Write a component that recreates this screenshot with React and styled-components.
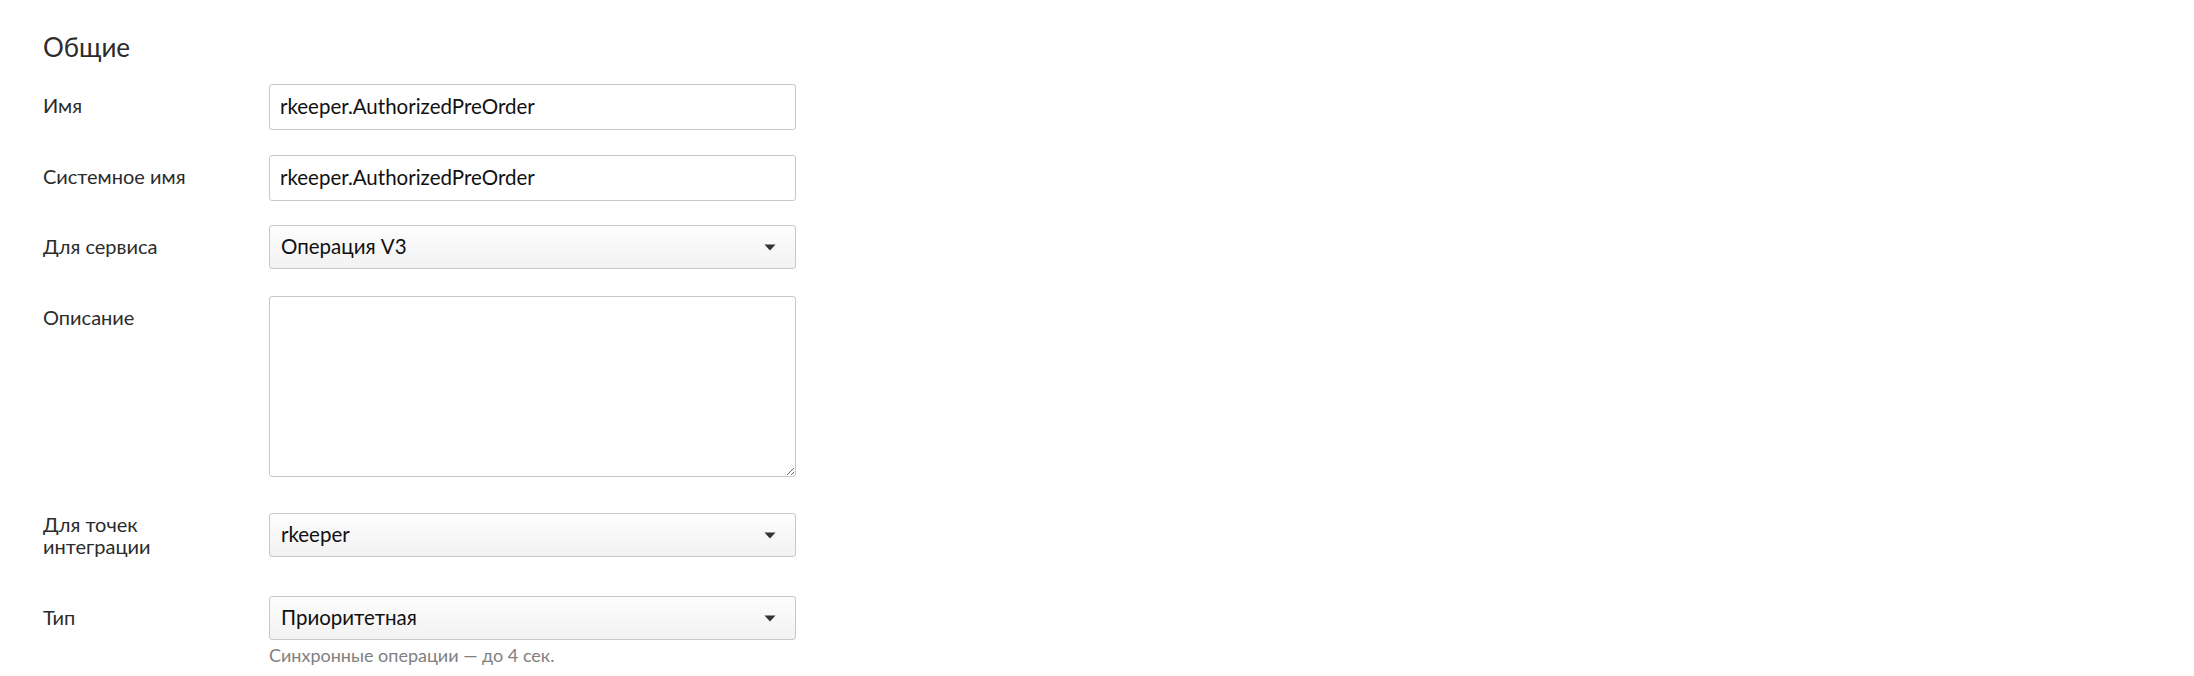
import React from "react";
import styled, { createGlobalStyle } from "styled-components";

const Global = createGlobalStyle`
  html, body { margin: 0; padding: 0; background: #fff; }
  body { font-family: Lato, "Open Sans", "Noto Sans", sans-serif; color: #2b2b2b; }
  * { box-sizing: border-box; }
`;

const Page = styled.div`
  padding: 31px 0 0 43px;
`;

const Title = styled.h2`
  margin: 0 0 21px;
  font-size: 26px;
  line-height: 32px;
  font-weight: 400;
  color: #2b2b2b;
`;

const Form = styled.div`
  display: flex;
  flex-direction: column;
`;

const Row = styled.div`
  display: grid;
  grid-template-columns: 226px 527px;
  align-items: ${(p) => (p.$center ? "center" : "start")};
  margin-bottom: ${(p) => p.$gap ?? 25}px;
`;

const Label = styled.label`
  font-size: 20px;
  line-height: 22px;
  color: #2b2b2b;
  padding-top: ${(p) => (p.$center ? 0 : 10)}px;
`;

const Field = styled.div`
  display: flex;
  flex-direction: column;
`;

const TextInput = styled.input`
  width: 100%;
  height: 46px;
  border: 1px solid #c8c8c8;
  border-radius: 3px;
  padding: 0 10px 3px;
  font-family: inherit;
  font-size: 20.5px;
  color: #111;
  background: #fff;
  outline: none;
`;

const TextArea = styled.textarea`
  display: block;
  width: 100%;
  height: 181px;
  border: 1px solid #c8c8c8;
  border-radius: 3px;
  padding: 10px;
  font-family: inherit;
  font-size: 20.5px;
  color: #111;
  background: #fff;
  outline: none;
`;

const SelectBox = styled.div`
  height: 44px;
  border: 1px solid #c8c8c8;
  border-radius: 3px;
  padding: 0 19px 2px 11px;
  display: flex;
  align-items: center;
  justify-content: space-between;
  background: linear-gradient(#fdfdfd, #f2f2f2);
  font-size: 20.5px;
  color: #111;
`;

const Caret = styled.svg`
  width: 12px;
  height: 7px;
  flex: none;
  margin-top: 2px;
`;

const Hint = styled.div`
  margin-top: 5px;
  font-size: 18px;
  line-height: 21px;
  color: #808080;
`;

const Select = ({ value }) => (
  <SelectBox>
    <span>{value}</span>
    <Caret viewBox="0 0 12 7">
      <path d="M0.5 0.5 L11.5 0.5 L6 6.5 Z" fill="#333" />
    </Caret>
  </SelectBox>
);

export default function App() {
  return (
    <>
      <Global />
      <Page>
        <Title>Общие</Title>
        <Form>
          <Row>
            <Label>Имя</Label>
            <TextInput defaultValue="rkeeper.AuthorizedPreOrder" />
          </Row>
          <Row $gap={24}>
            <Label>Системное имя</Label>
            <TextInput defaultValue="rkeeper.AuthorizedPreOrder" />
          </Row>
          <Row $gap={27}>
            <Label>Для сервиса</Label>
            <Select value="Операция V3" />
          </Row>
          <Row $gap={36}>
            <Label>Описание</Label>
            <TextArea />
          </Row>
          <Row $gap={39} $center>
            <Label $center>
              Для точек
              <br />
              интеграции
            </Label>
            <Select value="rkeeper" />
          </Row>
          <Row $gap={0}>
            <Label>Тип</Label>
            <Field>
              <Select value="Приоритетная" />
              <Hint>Синхронные операции — до 4 сек.</Hint>
            </Field>
          </Row>
        </Form>
      </Page>
    </>
  );
}
